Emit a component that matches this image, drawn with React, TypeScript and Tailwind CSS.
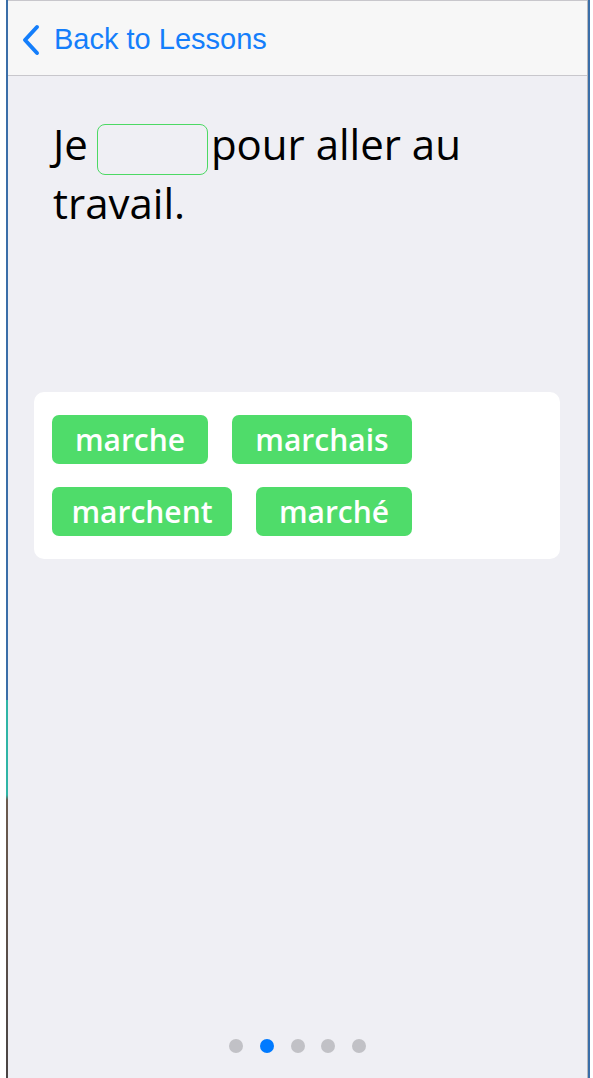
import React from 'react';

const choices = [
  { word: 'marche', width: 'w-[156px]' },
  { word: 'marchais', width: 'w-[180px]' },
  { word: 'marchent', width: 'w-[180px]' },
  { word: 'marché', width: 'w-[156px]' },
];

const ChevronLeft = () => (
  <svg width="20" height="32" viewBox="0 0 20 32" fill="none">
    <path d="M16 3 L4 16 L16 29" stroke="#147efb" strokeWidth="4" strokeLinecap="round" strokeLinejoin="round" />
  </svg>
);

const App: React.FC = () => {
  return (
    <div className="flex h-[1078px] w-[593px] overflow-hidden bg-white">
      <div className="w-[6px]" />
      <div className="w-[2px] bg-[linear-gradient(to_bottom,#3a6ea8_0px,#3a6ea8_700px,#2fb5a6_700px,#2fb5a6_795px,#6b5a4e_800px,#4a4444_1078px)]" />
      <main className="flex flex-1 flex-col bg-[#efeff4]" style={{ fontFamily: '"Open Sans", sans-serif' }}>
        <header className="flex h-[76px] items-center border-t border-b border-[#c8c7cc] bg-[#f7f7f7] pt-[3px] pl-[13px]">
          <ChevronLeft />
          <span
            className="ml-[13px] text-[29px] text-[#147efb]"
            style={{ fontFamily: '"Liberation Sans", Arial, sans-serif' }}
          >
            Back to Lessons
          </span>
        </header>

        <p className="mt-[40px] pl-[45px] pr-[20px] text-[42px] leading-[56px] text-black">
          Je
          <span className="ml-[9px] mr-[3px] inline-block h-[51px] w-[111px] rounded-[8px] border border-[#4cd964] align-[-15px]" />
          pour aller au travail.
        </p>

        <section className="ml-[26px] mt-[161px] w-[526px] rounded-[10px] bg-white px-[18px] pt-[23px] pb-[23px]">
          <div className="flex flex-wrap gap-x-[24px] gap-y-[23px] pr-[130px]">
            {choices.map((c) => (
              <button
                key={c.word}
                type="button"
                className={`${c.width} flex h-[49px] items-center justify-center rounded-[7px] bg-[#4fdc6a] text-[30px] font-semibold text-white`}
              >
                {c.word}
              </button>
            ))}
          </div>
        </section>

        <div className="mt-auto mb-[25px] flex justify-center gap-[16.75px]">
          {[0, 1, 2, 3, 4].map((i) => (
            <span key={i} className={`h-[14px] w-[14px] rounded-full ${i === 1 ? 'bg-[#007aff]' : 'bg-[#c1c1c6]'}`} />
          ))}
        </div>
      </main>
      <div className="w-[1px] bg-[#b9b9bd]" />
      <div className="w-[2px] bg-[#3a6ea8]" />
      <div className="w-[3px]" />
    </div>
  );
};

export default App;
